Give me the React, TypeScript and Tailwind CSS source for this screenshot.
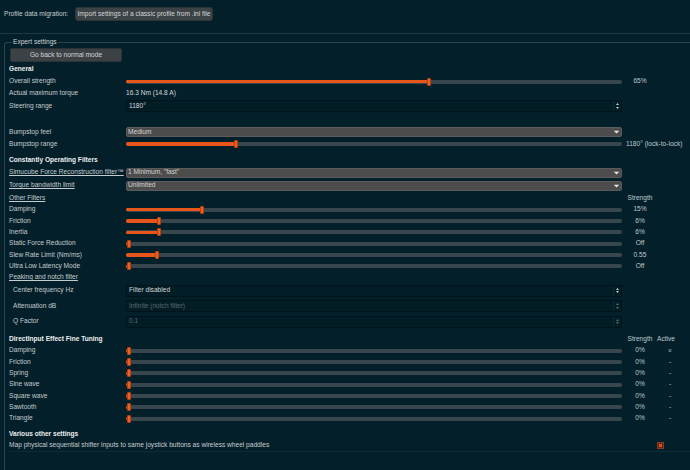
import React from "react";

type SliderRow = { label: string; handle: number; value: string; active?: string };

const otherFilters: SliderRow[] = [
  { label: "Damping", handle: 76, value: "15%" },
  { label: "Friction", handle: 32.5, value: "6%" },
  { label: "Inertia", handle: 32.5, value: "6%" },
  { label: "Static Force Reduction", handle: 3, value: "Off" },
  { label: "Slew Rate Limit (Nm/ms)", handle: 31.3, value: "0.55" },
  { label: "Ultra Low Latency Mode", handle: 3, value: "Off" },
];

const fineTuning: SliderRow[] = [
  { label: "Damping", handle: 3, value: "0%", active: "o" },
  { label: "Friction", handle: 3, value: "0%", active: "-" },
  { label: "Spring", handle: 3, value: "0%", active: "-" },
  { label: "Sine wave", handle: 3, value: "0%", active: "-" },
  { label: "Square wave", handle: 3, value: "0%", active: "-" },
  { label: "Sawtooth", handle: 3, value: "0%", active: "-" },
  { label: "Triangle", handle: 3, value: "0%", active: "-" },
];

function Slider({ handle }: { handle: number }) {
  // handle = centre of the knob, px from the track start
  return (
    <div className="relative flex h-[8px] w-[496px] items-center">
      <div className="h-[4px] w-full rounded-full bg-[#38474e]" />
      <div className="absolute left-0 h-[3.5px] rounded-l-full bg-[#e9561b]" style={{ width: handle }} />
      <div
        className="absolute top-0 h-[8px] w-[4px] rounded-[1px] border border-[#b3400f] bg-[#f55c1d]"
        style={{ left: handle - 2 }}
      />
    </div>
  );
}

function Combo({ text }: { text: string }) {
  return (
    <div className="flex h-[10px] w-[496px] items-center justify-between rounded-[2px] border border-[#5b5b5b] bg-[#4c4c4c] pl-[1px] pr-[2px] text-[#d4d4d4]">
      <span>{text}</span>
      <svg width="5" height="4" viewBox="0 0 5 4">
        <path d="M0 1h5L2.5 3.6z" fill="#e6e6e6" />
        <path d="M0 0.2h5" stroke="#e6e6e6" strokeWidth="0.4" />
      </svg>
    </div>
  );
}

function Spin({ text, disabled }: { text: string; disabled?: boolean }) {
  const arrow = disabled ? "#5c6a70" : "#c4cacc";
  return (
    <div className="flex h-[12px] w-[496px] items-center border border-[#00121a] bg-[#021d26]">
      <span className={`flex-1 pl-[2px] ${disabled ? "text-[#5a686e]" : "text-[#d2d6d8]"}`}>{text}</span>
      <div className="flex h-full w-[8px] flex-col items-center justify-center gap-[1.5px] border-l border-[#0b2a33]">
        <svg width="3" height="2" viewBox="0 0 3 2">
          <path d="M0 2h3L1.5 0z" fill={arrow} />
        </svg>
        <svg width="3" height="2" viewBox="0 0 3 2">
          <path d="M0 0h3L1.5 2z" fill={arrow} />
        </svg>
      </div>
    </div>
  );
}

function Row({
  label,
  h,
  children,
  value,
  active,
  underline,
  indent,
}: {
  label: string;
  h: string;
  children?: React.ReactNode;
  value?: React.ReactNode;
  active?: React.ReactNode;
  underline?: boolean;
  indent?: boolean;
}) {
  return (
    <div className={`flex items-center ${h}`}>
      <div className={`w-[117px] whitespace-nowrap ${indent ? "pl-[4px]" : ""} ${underline ? "underline" : ""}`}>
        {label}
      </div>
      <div className="flex w-[496px] items-center">{children}</div>
      <div className="ml-[2px] w-[32px] whitespace-nowrap text-center text-[#bfc8cd]">{value}</div>
      <div className="w-[28px] text-center text-[#bfc8cd]">{active}</div>
    </div>
  );
}

function Heading({ text, h, right }: { text: string; h: string; right?: React.ReactNode }) {
  return (
    <div className={`flex items-center ${h}`}>
      <div className="w-[613px] font-bold text-[#eceeef]">{text}</div>
      {right}
    </div>
  );
}

export default function App() {
  return (
    <div className="h-[470px] w-[690px] overflow-hidden bg-[#03202a] font-['Liberation_Sans',Arial,sans-serif] text-[6.6px] leading-none text-[#c6cbce]">
      <div className="flex h-[28px] items-center pl-[4px]">
        <div className="w-[71px] whitespace-nowrap">Profile data migration:</div>
        <button className="flex h-[14px] w-[138px] items-center justify-center rounded-[3px] border border-[#2c3336] bg-[#3c4245] text-[#d3d6d7]">
          Import settings of a classic profile from .ini file
        </button>
      </div>
      <div className="mt-[5px] h-[1px] bg-[#20373f]" />

      <div className="relative ml-[4px] mt-[8px] rounded-tl-[3px] border-l border-t border-[#2c434b] pl-[4px]">
        <span className="absolute left-[7px] top-[-4.5px] bg-[#03202a] px-[1px] text-[#d0d4d6]">Expert settings</span>

        <button className="ml-[1px] mt-[5px] flex h-[14px] w-[112px] items-center justify-center rounded-[2px] border border-[#2c3336] bg-[#3b4144] text-[#d3d6d7]">
          Go back to normal mode
        </button>

        <Heading text="General" h="h-[14px]" />
        <Row label="Overall strength" h="h-[11px]" value="65%">
          <Slider handle={303} />
        </Row>
        <Row label="Actual maximum torque" h="h-[12px]">
          <span className="text-[#d6dadc]">16.3 Nm (14.8 A)</span>
        </Row>
        <Row label="Steering range" h="h-[14px]">
          <Spin text="1180°" />
        </Row>
        <div className="h-[13px]" />
        <Row label="Bumpstop feel" h="h-[12px]">
          <Combo text="Medium" />
        </Row>
        <div className="flex h-[12px] items-center">
          <div className="w-[117px]">Bumpstop range</div>
          <Slider handle={110} />
          <span className="ml-[4px] whitespace-nowrap text-[#bfc8cd]">1180° (lock-to-lock)</span>
        </div>
        <div className="h-[4px]" />

        <Heading text="Constantly Operating Filters" h="h-[12px]" />
        <Row label="Simucube Force Reconstruction filter™" h="h-[13px]" underline>
          <Combo text={'1 Minimum, "fast"'} />
        </Row>
        <Row label="Torque bandwidth limit" h="h-[13px]" underline>
          <Combo text="Unlimited" />
        </Row>
        <Row label="Other Filters" h="h-[12px]" underline value="Strength" />
        {otherFilters.map((r) => (
          <Row key={r.label} label={r.label} h="h-[11.33px]" value={r.value}>
            <Slider handle={r.handle} />
          </Row>
        ))}
        <Row label="Peaking and notch filter" h="h-[11px]" underline />
        <Row label="Center frequency Hz" h="h-[15.5px]" indent>
          <Spin text="Filter disabled" />
        </Row>
        <Row label="Attenuation dB" h="h-[15.5px]" indent>
          <Spin text="Infinite (notch filter)" disabled />
        </Row>
        <Row label="Q Factor" h="h-[15.5px]" indent>
          <Spin text="0.1" disabled />
        </Row>
        <div className="h-[3.5px]" />

        <Heading
          text="DirectInput Effect Fine Tuning"
          h="h-[12px]"
          right={
            <div className="flex text-[#bfc8cd]">
              <div className="ml-[2px] w-[32px] text-center">Strength</div>
              <div className="ml-[1px]">Active</div>
            </div>
          }
        />
        {fineTuning.map((r) => (
          <Row
            key={r.label}
            label={r.label}
            h="h-[11.33px]"
            value={r.value}
            active={<span className={r.active === "o" ? "text-[5px]" : ""}>{r.active}</span>}
          >
            <Slider handle={r.handle} />
          </Row>
        ))}
        <div className="h-[4px]" />

        <Heading text="Various other settings" h="h-[12px]" />
        <div className="flex h-[12px] items-center border-b border-[#0c2c35]">
          <div className="w-[648px] whitespace-nowrap">
            Map physical sequential shifter inputs to same joystick buttons as wireless wheel paddles
          </div>
          <svg width="7" height="7" viewBox="0 0 7 7">
            <rect x="0.5" y="0.5" width="6" height="6" fill="#4a2418" stroke="#8a3a1c" />
            <path d="M2 2l3 3M5 2l-3 3" stroke="#ff5a1e" strokeWidth="1.1" />
          </svg>
        </div>
        <div className="h-[30px]" />
      </div>
    </div>
  );
}
